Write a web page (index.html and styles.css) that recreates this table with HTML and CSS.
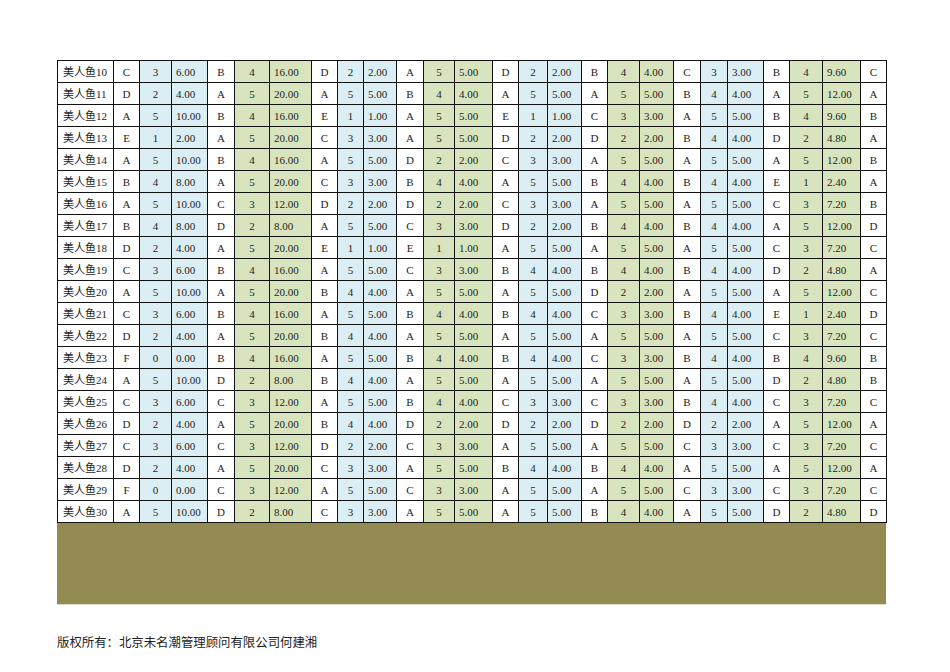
FILE: index.html
```html
<!DOCTYPE html>
<html lang="zh-CN">
<head>
<meta charset="utf-8">
<title>美人鱼</title>
<link rel="stylesheet" href="styles.css">
</head>
<body>
<div class="page">
<table class="grid">
<colgroup>
<col class="c56"><col class="c26"><col class="c32"><col class="c36">
<col class="c27"><col class="c35"><col class="c42">
<col class="c26"><col class="c26"><col class="c33">
<col class="c27"><col class="c31"><col class="c38">
<col class="c26"><col class="c29"><col class="c34">
<col class="c26"><col class="c32"><col class="c34">
<col class="c27"><col class="c27"><col class="c36">
<col class="c26"><col class="c33"><col class="c38">
<col class="c26">
</colgroup>
<tbody id="rows"></tbody>
</table>
<div class="olive"></div>
<p class="footer">版权所有：北京未名潮管理顾问有限公司何建湘</p>
</div>
<script src="app.js"></script>
</body>
</html>
```

FILE: app.js
```js
var data = [
"10 C3 6.00 B4 16.00 D2 2.00 A5 5.00 D2 2.00 B4 4.00 C3 3.00 B4 9.60 C",
"11 D2 4.00 A5 20.00 A5 5.00 B4 4.00 A5 5.00 A5 5.00 B4 4.00 A5 12.00 A",
"12 A5 10.00 B4 16.00 E1 1.00 A5 5.00 E1 1.00 C3 3.00 A5 5.00 B4 9.60 B",
"13 E1 2.00 A5 20.00 C3 3.00 A5 5.00 D2 2.00 D2 2.00 B4 4.00 D2 4.80 A",
"14 A5 10.00 B4 16.00 A5 5.00 D2 2.00 C3 3.00 A5 5.00 A5 5.00 A5 12.00 B",
"15 B4 8.00 A5 20.00 C3 3.00 B4 4.00 A5 5.00 B4 4.00 B4 4.00 E1 2.40 A",
"16 A5 10.00 C3 12.00 D2 2.00 D2 2.00 C3 3.00 A5 5.00 A5 5.00 C3 7.20 B",
"17 B4 8.00 D2 8.00 A5 5.00 C3 3.00 D2 2.00 B4 4.00 B4 4.00 A5 12.00 D",
"18 D2 4.00 A5 20.00 E1 1.00 E1 1.00 A5 5.00 A5 5.00 A5 5.00 C3 7.20 C",
"19 C3 6.00 B4 16.00 A5 5.00 C3 3.00 B4 4.00 B4 4.00 B4 4.00 D2 4.80 A",
"20 A5 10.00 A5 20.00 B4 4.00 A5 5.00 A5 5.00 D2 2.00 A5 5.00 A5 12.00 C",
"21 C3 6.00 B4 16.00 A5 5.00 B4 4.00 B4 4.00 C3 3.00 B4 4.00 E1 2.40 D",
"22 D2 4.00 A5 20.00 B4 4.00 A5 5.00 A5 5.00 A5 5.00 A5 5.00 C3 7.20 C",
"23 F0 0.00 B4 16.00 A5 5.00 B4 4.00 B4 4.00 C3 3.00 B4 4.00 B4 9.60 B",
"24 A5 10.00 D2 8.00 B4 4.00 A5 5.00 A5 5.00 A5 5.00 A5 5.00 D2 4.80 B",
"25 C3 6.00 C3 12.00 A5 5.00 B4 4.00 C3 3.00 C3 3.00 B4 4.00 C3 7.20 C",
"26 D2 4.00 A5 20.00 B4 4.00 D2 2.00 D2 2.00 D2 2.00 D2 2.00 A5 12.00 A",
"27 C3 6.00 C3 12.00 D2 2.00 C3 3.00 A5 5.00 A5 5.00 C3 3.00 C3 7.20 C",
"28 D2 4.00 A5 20.00 C3 3.00 A5 5.00 B4 4.00 B4 4.00 A5 5.00 A5 12.00 A",
"29 F0 0.00 C3 12.00 A5 5.00 C3 3.00 A5 5.00 A5 5.00 C3 3.00 C3 7.20 C",
"30 A5 10.00 D2 8.00 C3 3.00 A5 5.00 A5 5.00 B4 4.00 A5 5.00 D2 4.80 D"
];
var body = document.getElementById("rows");
data.forEach(function (line) {
  var parts = line.split(" ");
  var tr = document.createElement("tr");
  var name = document.createElement("td");
  name.className = "name";
  name.textContent = "美人鱼" + parts[0];
  tr.appendChild(name);
  for (var g = 0; g < 8; g++) {
    var lv = parts[1 + g * 2];
    var sc = parts[2 + g * 2];
    var tone = g % 2 === 0 ? "blue" : "green";
    var a = document.createElement("td");
    a.className = "letter";
    a.textContent = lv.charAt(0);
    var b = document.createElement("td");
    b.className = "num " + tone;
    b.textContent = lv.slice(1);
    var c = document.createElement("td");
    c.className = "score " + tone;
    c.textContent = sc;
    tr.appendChild(a); tr.appendChild(b); tr.appendChild(c);
  }
  var last = document.createElement("td");
  last.className = "letter";
  last.textContent = parts[17];
  tr.appendChild(last);
  body.appendChild(tr);
});
```

FILE: styles.css
```css
html, body {
  margin: 0;
  padding: 0;
  background: #ffffff;
}
.page {
  padding: 60px 0 0 57px;
  font-family: "Liberation Serif", "Noto Sans CJK SC", serif;
  color: #1e1e1e;
}
.grid {
  border-collapse: collapse;
  table-layout: fixed;
  width: 830px;
}
.grid td {
  border: 1px solid #111111;
  height: 21px;
  padding: 0;
  font-size: 11px;
  line-height: 12px;
  white-space: nowrap;
  overflow: hidden;
  vertical-align: middle;
}
.grid tr { height: 22px; }
.c56 { width: 56px; }
.c26 { width: 26px; }
.c27 { width: 27px; }
.c29 { width: 29px; }
.c31 { width: 31px; }
.c32 { width: 32px; }
.c33 { width: 33px; }
.c34 { width: 34px; }
.c35 { width: 35px; }
.c36 { width: 36px; }
.c38 { width: 38px; }
.c42 { width: 42px; }
.name {
  padding-left: 5px !important;
  text-align: left;
}
.letter { text-align: center; background: #ffffff; }
.num { text-align: center; }
.score { text-align: left; padding-left: 4px !important; }
.blue { background: #daeef3; }
.green { background: #d7e4bd; }
.olive {
  width: 829px;
  height: 81px;
  background: #948a54;
  border-bottom: 1px solid #ddd9c3;
}
.footer {
  margin: 29px 0 0 0;
  font-family: "Noto Sans CJK SC", sans-serif;
  font-size: 12.4px;
  line-height: 16px;
  color: #222222;
}
```
